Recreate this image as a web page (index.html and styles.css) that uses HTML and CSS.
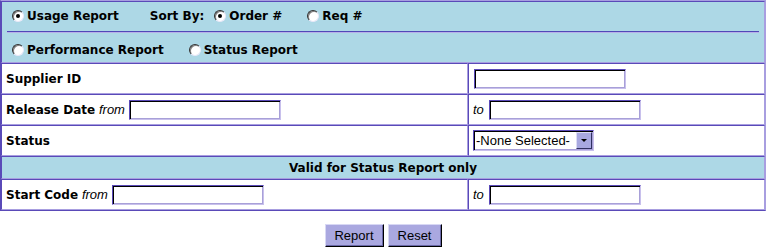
FILE: index.html
```html
<!DOCTYPE html>
<html>
<head>
<meta charset="utf-8">
<title>Report</title>
<link rel="stylesheet" href="styles.css">
</head>
<body>
<form class="report-form">
  <table class="grid">
    <tr>
      <td colspan="2" class="head">
        <div class="line line-1">
          <label class="opt"><input type="radio" name="rpt" checked><span>Usage Report</span></label>
          <span class="sortby">Sort By:</span>
          <label class="opt"><input type="radio" name="sort" checked><span>Order #</span></label>
          <label class="opt opt-req"><input type="radio" name="sort"><span>Req #</span></label>
        </div>
        <div class="divider"></div>
        <div class="line line-2">
          <label class="opt"><input type="radio" name="rpt"><span>Performance Report</span></label>
          <label class="opt opt-status"><input type="radio" name="rpt"><span>Status Report</span></label>
        </div>
      </td>
    </tr>
    <tr>
      <td class="left"><b>Supplier ID</b></td>
      <td class="right"><input type="text" class="txt"></td>
    </tr>
    <tr>
      <td class="left"><b>Release Date</b> <i>from</i> <input type="text" class="txt"></td>
      <td class="right"><i>to</i> <input type="text" class="txt"></td>
    </tr>
    <tr>
      <td class="left"><b>Status</b></td>
      <td class="right">
        <span class="sel-wrap"><select class="sel"><option>-None Selected-</option></select></span>
      </td>
    </tr>
    <tr>
      <td colspan="2" class="sub">Valid for Status Report only</td>
    </tr>
    <tr>
      <td class="left"><b>Start Code</b> <i>from</i> <input type="text" class="txt"></td>
      <td class="right"><i>to</i> <input type="text" class="txt"></td>
    </tr>
  </table>
  <div class="actions">
    <button type="button" class="btn btn-report">Report</button>
    <button type="reset" class="btn btn-reset">Reset</button>
  </div>
</form>
</body>
</html>
```

FILE: styles.css
```css
html, body {
  margin: 0;
  padding: 0;
  background: #ffffff;
}

body {
  font-family: "DejaVu Sans", Verdana, sans-serif;
  font-size: 12px;
  color: #000;
}

.report-form {
  margin: 0;
}

.grid {
  width: 766px;
  border-collapse: separate;
  border-spacing: 0;
  border-top: 1px solid #a89ee0;
  border-right: 1px solid #a89ee0;
  border-left: 1px solid #5a4ab8;
  border-bottom: 1px solid #5a4ab8;
}

.grid td {
  border-top: 1px solid #5a4ab8;
  border-left: 1px solid #5a4ab8;
  border-right: 1px solid #a89ee0;
  border-bottom: 1px solid #a89ee0;
  padding: 0 3px 0 4px;
  height: 29px;
  vertical-align: middle;
  white-space: nowrap;
}

.grid td.left {
  width: 458px;
}

.grid td.head {
  background: #add8e6;
  padding: 0;
  height: 60px;
}

.grid td.sub {
  background: #add8e6;
  text-align: center;
  font-weight: bold;
  height: 21px;
  padding: 0;
}

b {
  font-weight: bold;
}

i {
  font-family: "Liberation Sans", Arial, sans-serif;
  font-size: 13px;
  font-style: italic;
}

.line {
  display: flex;
  align-items: center;
  font-weight: bold;
  padding-left: 10px;
}

.line-1 {
  height: 28px;
}

.line-2 {
  height: 25px;
  padding-top: 4px;
}

.divider {
  margin: 1px 5px 0 5px;
  border-top: 1px solid #5048b8;
  border-bottom: 1px solid #b8b0e8;
}

.opt {
  display: inline-flex;
  align-items: center;
}

.opt span {
  margin-left: 3px;
}

.sortby {
  margin-left: 31px;
  margin-right: 10px;
}

.opt-req {
  margin-left: 25px;
}

.opt-status {
  margin-left: 25px;
}

input[type="radio"] {
  -webkit-appearance: none;
  appearance: none;
  margin: 0;
  width: 12px;
  height: 12px;
  border-radius: 50%;
  background: #fff;
  border: 1px solid;
  border-color: #303030 #e8e8f8 #e8e8f8 #303030;
  box-shadow: inset 1px 1px 0 #808080;
  position: relative;
}

input[type="radio"]:checked::after {
  content: "";
  position: absolute;
  left: 3px;
  top: 3px;
  width: 4px;
  height: 4px;
  border-radius: 50%;
  background: #000;
}

.txt {
  box-sizing: border-box;
  width: 152px;
  height: 20px;
  margin: 0;
  padding: 0 2px;
  vertical-align: middle;
  background: #fff;
  border: 1px solid;
  border-color: #5a4ab8 #c8c0ec #c8c0ec #5a4ab8;
  box-shadow: inset 1px 1px 0 #000, inset -1px -1px 0 #a8a0d8;
  outline: none;
}

.right .txt {
  margin-left: 1px;
}

.sel-wrap {
  position: relative;
  display: inline-block;
  vertical-align: middle;
}

.sel {
  -webkit-appearance: none;
  appearance: none;
  box-sizing: border-box;
  width: 121px;
  height: 21px;
  margin: 0;
  padding: 0 18px 0 2px;
  font-family: "Liberation Sans", Arial, sans-serif;
  font-size: 13px;
  color: #000;
  background: #fff;
  border: 1px solid;
  border-color: #5a4ab8 #c8c0ec #c8c0ec #5a4ab8;
  box-shadow: inset 1px 1px 0 #000, inset -1px -1px 0 #a8a0d8;
  outline: none;
  display: block;
}

.sel-wrap::before {
  content: "";
  position: absolute;
  right: 2px;
  top: 2px;
  width: 14px;
  height: 15px;
  background: #a8a8e0;
  border-top: 1px solid #dcdcf4;
  border-left: 1px solid #dcdcf4;
  border-right: 1px solid #303060;
  border-bottom: 1px solid #303060;
  box-sizing: content-box;
  pointer-events: none;
}

.sel-wrap::after {
  content: "";
  position: absolute;
  right: 7px;
  top: 9px;
  width: 0;
  height: 0;
  border-left: 3px solid transparent;
  border-right: 3px solid transparent;
  border-top: 3px solid #000;
  pointer-events: none;
}

.actions {
  display: flex;
  justify-content: center;
  gap: 4px;
  margin-top: 13px;
}

.btn {
  box-sizing: border-box;
  height: 23px;
  margin: 0;
  padding: 0 6px;
  font-family: "Liberation Sans", Arial, sans-serif;
  font-size: 13px;
  color: #000;
  background: #aaa8e0;
  border: 1px solid;
  border-color: #d8d8f4 #000 #000 #d8d8f4;
  box-shadow: inset -1px -1px 0 #6a68a8;
}

.btn-report {
  width: 59px;
}

.btn-reset {
  width: 54px;
}
```
